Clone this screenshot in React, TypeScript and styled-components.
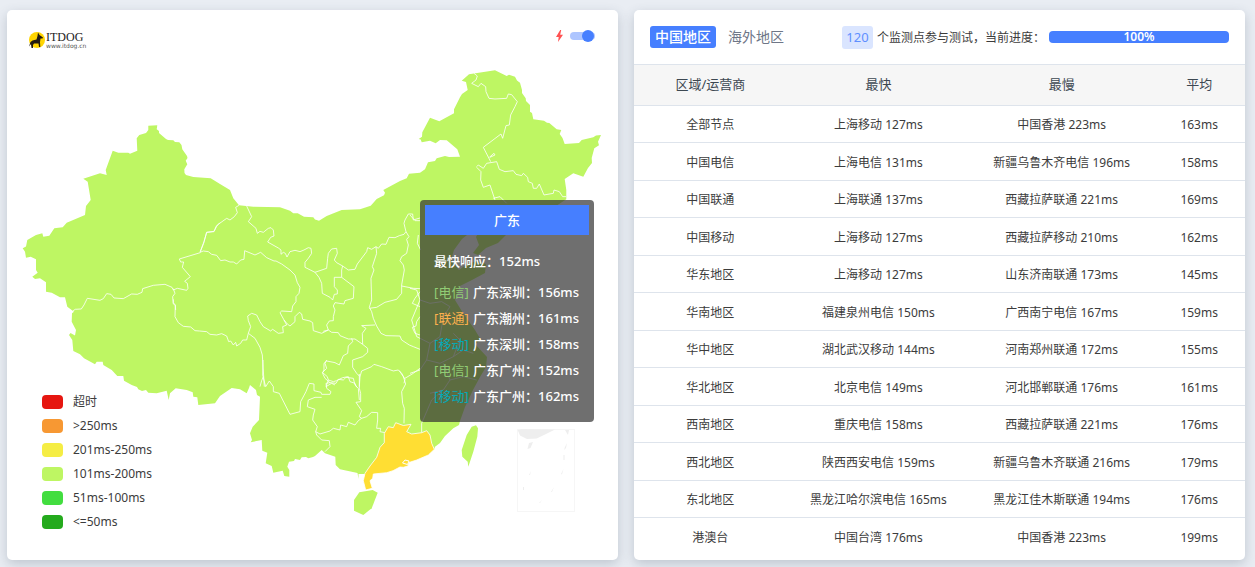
import React from "react";
import styled, { createGlobalStyle } from "styled-components";

const GlobalStyle = createGlobalStyle`
  *, *::before, *::after { box-sizing: border-box; }
  body {
    margin: 0;
    background: #e9edf3;
    color: #3c3c3c;
    font-family: "Noto Sans", "Noto Sans CJK SC", sans-serif;
    font-size: 12px;
  }
`;

const Page = styled.main`
  display: grid;
  grid-template-columns: 1fr 1fr;
  gap: 16px;
  padding: 10px 10px 7px 7px;
`;

const Card = styled.section`
  min-width: 0;
  background: #fff;
  border-radius: 5px;
  box-shadow: 0 4px 12px rgba(60, 75, 95, 0.24);
  overflow: hidden;
`;

const MapHeader = styled.header`
  display: flex;
  align-items: center;
  justify-content: space-between;
  height: 50px;
  padding: 0 23px 0 21px;
`;

const Logo = styled.a`
  display: flex;
  align-items: center;
  margin-top: 10px;
  color: #222;
  text-decoration: none;
`;

const LogoText = styled.span`
  display: flex;
  flex-direction: column;
  font-family: "Liberation Serif", serif;
  font-size: 12px;
  line-height: 12px;
`;

const LogoUrl = styled.small`
  font-family: "DejaVu Sans", sans-serif;
  font-size: 6px;
  line-height: 6px;
  color: #555;
`;

const SpeedToggle = styled.label`
  display: flex;
  align-items: center;
  gap: 6px;
  margin-top: 2px;
`;

const Switch = styled.input`
  appearance: none;
  position: relative;
  width: 25px;
  height: 8px;
  margin: 0;
  border-radius: 4px;
  background: #adc5ff;
  &::before {
    content: "";
    position: absolute;
    top: -2px;
    left: 0;
    width: 12px;
    height: 12px;
    border-radius: 50%;
    background: #467fff;
  }
  &:checked::before { left: 12px; }
`;

const MapArea = styled.div`
  position: relative;
`;

const MapSvg = styled.svg`
  display: block;
  width: 100%;
  height: auto;
`;

const Legend = styled.ul`
  position: absolute;
  left: 35px;
  bottom: 26px;
  margin: 0;
  padding: 0;
  list-style: none;
`;

const LegendItem = styled.li`
  display: flex;
  align-items: center;
  gap: 10px;
  height: 24px;
  line-height: 20px;
`;

const Swatch = styled.i<{ $color: string }>`
  width: 21px;
  height: 14px;
  border-radius: 4px;
  background: ${(p) => p.$color};
`;

const LegendText = styled.span`
  padding-bottom: 1px;
`;

const Tooltip = styled.div`
  position: absolute;
  top: 140px;
  right: 24px;
  padding: 5px;
  border-radius: 4px;
  background: rgba(50, 50, 50, 0.7);
  color: #fff;
  font-size: 13px;
  font-weight: 500;
  line-height: 26px;
  white-space: nowrap;
`;

const TooltipTitle = styled.div`
  background: #467fff;
  line-height: 30px;
  text-align: center;
`;

const TooltipBody = styled.div`
  padding: 13px 10px 8px 9px;
`;

const Fastest = styled.p`
  margin: 0 0 5px;
`;

const Carrier = styled.span<{ $color: string }>`
  margin-right: 1px;
  color: ${(p) => p.$color};
  font-weight: 400;
`;

const PanelHeader = styled.header`
  display: flex;
  align-items: center;
  justify-content: space-between;
  height: 54px;
  padding: 0 16px;
`;

const Tabs = styled.nav`
  display: flex;
  gap: 7px;
`;

const Tab = styled.button<{ $active?: boolean }>`
  height: 22px;
  padding: 0 5px;
  border: 0;
  border-radius: 3px;
  background: ${(p) => (p.$active ? "#467fff" : "transparent")};
  color: ${(p) => (p.$active ? "#fff" : "#6e7687")};
  font-family: inherit;
  font-size: 14px;
  font-weight: ${(p) => (p.$active ? 500 : 400)};
  line-height: 22px;
`;

const Status = styled.div`
  display: flex;
  align-items: center;
  gap: 4px;
  white-space: nowrap;
`;

const Count = styled.span`
  min-width: 31px;
  border-radius: 3px;
  background: #dae5ff;
  color: #5f8fff;
  font-size: 13px;
  line-height: 23px;
  text-align: center;
`;

const Progress = styled.div`
  width: 180px;
  height: 12px;
  border-radius: 4px;
  background: #467fff;
  color: #fff;
  font-weight: 600;
  line-height: 12px;
  text-align: center;
`;

const Table = styled.table`
  width: 100%;
  table-layout: fixed;
  border-spacing: 0;
  text-align: center;
`;

const HeadCell = styled.th<{ $width: string }>`
  width: ${(p) => p.$width};
  height: 41px;
  padding: 0 0 3px;
  border-top: 1px solid #dee4ec;
  background: #f6f6f6;
  color: #3d4852;
  font-size: 13px;
  font-weight: 400;
`;

const Row = styled.tr`
  height: 37px;
  &:nth-child(even) { height: 38px; }
`;

const Cell = styled.td`
  padding: 2px 0 0;
  border-top: 1px solid #dee4ec;
  line-height: 20px;
`;

const legend = [
  ["#e61610", "超时"],
  ["#f79833", ">250ms"],
  ["#f5ed44", "201ms-250ms"],
  ["#bef663", "101ms-200ms"],
  ["#42dd3f", "51ms-100ms"],
  ["#24aa1d", "<=50ms"],
];

const readings = [
  ["#91cc75", "电信", "广东深圳：156ms"],
  ["#fdb04e", "联通", "广东潮州：161ms"],
  ["#05a9b8", "移动", "广东深圳：158ms"],
  ["#91cc75", "电信", "广东广州：152ms"],
  ["#05a9b8", "移动", "广东广州：162ms"],
];

const rows = [
  ["全部节点", "上海移动 127ms", "中国香港 223ms", "163ms"],
  ["中国电信", "上海电信 131ms", "新疆乌鲁木齐电信 196ms", "158ms"],
  ["中国联通", "上海联通 137ms", "西藏拉萨联通 221ms", "169ms"],
  ["中国移动", "上海移动 127ms", "西藏拉萨移动 210ms", "162ms"],
  ["华东地区", "上海移动 127ms", "山东济南联通 173ms", "145ms"],
  ["华南地区", "福建泉州电信 150ms", "广西南宁电信 167ms", "159ms"],
  ["华中地区", "湖北武汉移动 144ms", "河南郑州联通 172ms", "155ms"],
  ["华北地区", "北京电信 149ms", "河北邯郸联通 176ms", "161ms"],
  ["西南地区", "重庆电信 158ms", "西藏拉萨联通 221ms", "176ms"],
  ["西北地区", "陕西西安电信 159ms", "新疆乌鲁木齐联通 216ms", "179ms"],
  ["东北地区", "黑龙江哈尔滨电信 165ms", "黑龙江佳木斯联通 194ms", "176ms"],
  ["港澳台", "中国台湾 176ms", "中国香港 223ms", "199ms"],
];

const mainland =
  "M148.3 125.7L157.3 125.3 156.7 129.3 159 131 159 133 166 139 168 140 173.3 140.3 175 142 179.3 142.3 181.5 145 182.3 149.3 187 156 187.5 158 185.7 160.7 187.3 164.3 184.3 169.3 184.5 173 186 175 193.3 177 210.7 178.3 220 184 230 190 233.3 198.3 239 205.3 253.3 206.7 280 207.3 290 210.7 293.3 213.3 297.7 213.3 304 216.7 313.3 217.3 315 219.5 319 220.7 326.7 216 341.7 210 360 209.3 370.7 205.7 376.7 199 384 195.3 385 192.7 383.3 190 400 181 406.7 178.3 409 173.7 420 172.7 425 169.3 428 162.3 435 161 436.7 158.3 445 156 449 157 460 156.7 457.3 149.3 446.7 140.3 440 140 435.7 143.3 430 140.7 421.7 142.3 420.7 139.5 418.7 139 422 136.7 422.3 132.3 430 117.7 439.3 121.3 454 113.3 454 109.3 460 97.3 462 94 467.7 90 466 82 461.7 80.7 469 74.3 495 70.3 506.7 76 509 74.7 515 76.7 517 80.5 520 82.7 522 90 522 93 525.7 98.3 526 101 530 105 530 111.7 532 113 533.3 119.3 544 120.7 547 122.7 549.3 123 556.7 129.3 561.3 130 559.7 134 562.5 138 564.7 144 579 143 581.7 140 593.3 137.3 596 135.5 601 135 598 141.7 599 145.3 594.3 148.3 591.7 158 592 163 588 168 583.3 176.7 573.3 173.3 564.7 179 566.3 190 566.3 199.3 556 206 548 216 533 223 520 230 506 235 498 243 486 248 478 255 473 253 479 245 476 237 481 227 472 231 462 239 454 250 451 260 459 270 467 264 477 261 486 264 485 273 472 280 460 286 455 300 463 313 475 330 481 340 475 344 487 357 486 367 480 377 473 390 465 407 460 421 459 425 453.3 428.3 445 436 440 443 435 446.7 434.3 449.3 428 455 400 465 372 474 362 474 358.5 474 358.5 479 357.5 473 351.7 471.7 340 469.3 335.7 465 335.3 456.7 325 453.3 321.7 450 315 456 313 457 308.3 458.3 306 457 301.7 457.3 300 460 295 459 294 461 289 461.7 287.3 466.7 289.3 470 289.3 476.7 284.3 476 282.7 470.7 273.3 472.7 271.7 466 265.7 463.3 267.3 452.7 262.3 450.7 261.7 440 250.7 442.3 252 440 250 433.3 252.7 426.7 259 420 260 396.7 257 395 256 390 250 385 249 388 246.7 393.3 240 389.3 231.7 388 220 396 215 403.3 198.3 405 197.3 397.3 193.3 396.7 192.7 392.3 186.7 390 175.7 388.3 170 393.3 168.7 400 166.7 390.7 156.7 393.3 148.3 392.7 146 390 142 391 138.3 389.3 137 387 131.7 385 124 380.7 123.3 376 117.3 376 111.7 370 103.3 365 102.7 361.7 96.7 361.7 95 364.3 84 358.3 80 354.3 73.3 351 72.3 340 69 335 70.5 333 75 335.5 76 330 71.7 321.7 72 313.3 74 311.7 67.3 306.7 65 297.3 60 297.3 51.7 292.7 46 291.7 46 282.3 40 278.3 35 279 32.3 276.7 37.7 272.7 36 270 36 259.3 30.7 256.7 26 257.7 25 251.7 22.7 248.3 26 246.5 27.3 240 36 235 42.3 233.3 43.3 236.7 49.3 235.7 54.3 228.3 62.7 227.3 66.7 222.7 85 215 86 206 90.7 200 87.7 181.7 83.3 178.7 100 173.3 106.7 175 105.7 170 112.7 150.7 118.3 152.7 128.3 152.7 130 153.7 137.3 150.7 136.7 138.3 139.3 135 146 133 148.3 130Z";

// Province borders, grouped by region; each group is drawn on a grid three times finer than the map.
const borders = [
  {
    origin: "10 110",
    d: "M188 603L196 598 214 597 222 585 232 565 270 571 280 566 290 551 303 553 312 564 340 566 365 552 382 553 396 547 398 536 430 526 465 523 486 532 490 540 502 535 530 541 534 535 532 520 524 514 541 500 517 472 521 456 512 456 508 447 571 428M490 536L495 550 488 560 490 582 496 586 497 600M571 425L581 400 590 367 612 364 618 350 630 338",
  },
  {
    origin: "60 270",
    d: "M340 88L340 98 346 105 345 140 355 158 370 169 392 171 405 182 418 183",
  },
  {
    origin: "200 190",
    d: "M117 46L107 52 112 68 103 80 90 90 80 85 52 105 42 125 20 127 12 155 0 187M139 46L155 80 145 95 168 115 172 130 180 124 190 127 205 115 213 113 220 120 222 138 212 142 203 156 235 174 243 180 243 193 250 187 256 190 261 201 270 185 285 181 300 185 312 180 325 173 333 175 335 190 325 205 315 217 315 232 345 247M0 187L10 183 25 185 35 193 50 196 62 212 75 210 90 216 100 216 110 222 122 210 132 208 134 182 165 195 182 187 200 203 222 213 228 213 245 222 270 240 285 255 292 278 300 292 297 310 288 320 288 335 278 348 275 365 245 363 240 368 252 390 262 402 270 408 285 395 285 380 298 367 305 372 308 388 330 393 338 398 340 422 365 430 385 420M145 430L152 410 145 392 143 378 155 370 170 375 180 395 190 410 212 423 218 418 235 430 250 428 248 410 260 405 252 390M-2 423L20 425 30 433 50 435 65 431 80 438 86 455 92 453 100 465 107 457 110 468 122 460 128 450 140 450 145 430M345 247L380 235 383 205 385 190 395 177 410 175 412 190 403 210 410 218 428 228 425 240 425 262 403 262 403 290 412 300 412 312 403 313 398 330 390 322 367 310 365 280 357 262 345 247M425 262L462 290 460 325 435 332 432 342 405 338 400 348 405 360 400 380 400 392 388 393 380 405 385 420 370 424M428 228L445 240 465 238 472 222 500 185 503 173 515 178 528 170 535 175 545 162 558 163 567 142 585 143 598 137 612 133 618 125M528 170L530 190 517 230 522 240 513 265 515 330 508 352 515 365 520 385 530 408 543 430 558 437 600 438 605 450 628 465 640 470 660 478M508 355L530 352 555 337 590 328 605 310 605 285 613 240 610 225 600 212 605 200 620 190 625 165 620 148 627 140 618 125 612 100 615 90 625 72 638 72 640 90 660 84M605 288L640 295 660 296M660 305L645 325 637 340 660 350M660 380L650 395 648 408 637 412 645 430 660 435M385 420L395 427 415 428 420 437 445 447 465 447 488 463 487 430 498 415 485 407 525 405M455 445L458 455 445 468 443 490 430 497 418 525 405 518 380 513 372 520 372 540 368 548 382 560 385 570 378 590 395 580 405 585M488 463L503 475 503 487 488 500 458 510 458 532 470 550 480 560 478 590M480 560L485 543 515 530 522 523 545 530 580 543 595 540 605 550 615 568 612 580M615 565L640 550 660 535M385 570L400 575 410 572 428 563 445 560 450 575 465 580 470 592M145 430L165 445 180 472 187 495 193 590M190 560L185 572 180 590",
  },
  {
    origin: "230 360",
    d: "M99 0L98 45 107 80 118 63 130 80 130 95 148 100 180 163 210 155 212 125 228 95 238 70 252 72 252 92 273 97 275 103 300 103 303 95 290 85 288 70 300 68 318 70 325 58 340 60 348 52 370 55 375 75 385 85 388 120M275 112L255 112 235 120 232 140 255 148 250 165 248 180 262 200 257 215M290 0L285 10 290 25 277 38 285 55 300 68M388 42L388 85 392 100 392 125 378 127 395 152 388 170 395 175M508 32L520 50 527 72 515 95 518 130 523 145 522 190M257 215L270 222 300 213 310 205 330 210 332 195 350 200 355 187 375 195 385 182 395 175 410 170 425 157 443 158 443 180 440 205 452 205 450 215 465 218M257 215L260 225 275 240 298 242 300 260 285 275M575 218L575 190 590 155 605 120 640 90",
  },
  {
    origin: "400 60",
    d: "M222 40L232 48 228 60 215 70 235 80 243 70 257 80 258 95 267 115 285 117 320 115 325 102 335 104 352 125 345 140 332 165 328 195 318 197 308 235 303 222 250 262 272 305M268 292L282 280 285 285 270 292M230 320L235 315 250 325 260 310 290 305 298 328 315 335 340 332 348 343 365 347 370 340 383 352 385 365 397 370 400 385 410 385 418 372 432 405 460 400 462 390 478 395 488 410 498 410M230 322L243 335 242 360 250 382 270 375 280 405 285 420M280 415L300 410 320 430",
  },
  {
    origin: "410 190",
    d: "M0 75L15 92 30 92M25 135L22 160 32 180M0 295L20 300 30 330 60 340 95 335 120 350M30 330L5 390 20 440 60 460 90 440 100 380 120 350M0 550L30 540 50 510 60 460M50 510L90 520 130 500 160 480 190 490M100 520L120 570 100 600 60 610M120 570L160 560 200 570M130 430L150 450 130 500",
  },
];

const guangdong =
  "M434.3 449.3L428.3 455 416.7 460 409 462.5 408 466 403.3 467.3 400 467 393 470.7 386.7 472.7 373.3 474 372.7 478.3 370 480.7 372.3 488.3 365.7 490 363.3 480.7 365 473.3 370 466 376.7 457.3 380 447.3 384.3 442.7 384.3 433.3 388.3 426.7 393.3 427.7 395.7 422.7 403.3 425.5 411 424.3 406.7 431.7 411.7 434 421.7 432.7 426.7 430.7 430 435 431.7 443.3Z";

function ChinaMap() {
  return (
    <MapSvg viewBox="7 60 611 500" role="img" aria-label="中国地区">
      <path d={mainland} fill="#bef663" />
      <path d="M359.3 492.3L372.7 490 377.7 492.7 371.7 508.3 363.3 515 354 510.7 354 500Z" fill="#bef663" />
      <path d="M471.7 426.7L476 425.3 478 428.3 477.3 436.7 473.3 451.7 468.3 466.7 467.7 461.7 462.3 456.7 461.7 450 466.7 435Z" fill="#bef663" />
      {borders.map((b) => (
        <g key={b.origin} transform={`translate(${b.origin}) scale(0.3333)`}>
          <path d={b.d} fill="none" stroke="#fff" strokeOpacity="0.8" strokeWidth="3" strokeLinejoin="round" />
        </g>
      ))}
      <path d={guangdong} fill="#ffde33" stroke="#fff" strokeOpacity="0.8" />
      <path d="M402.5 463L405 460 409 461 407.5 464.5Z" fill="#ffde33" stroke="#fff" />
      <rect x="517.5" y="429.5" width="57" height="82" fill="none" stroke="#f6f6f6" />
      <path d="M517.7 430L522 429.3 555 429.5 546 434 536.7 438.5 527 439 520 435.5ZM565 430L569 430 568 435ZM529 443L533 442 530.5 448 527.5 449ZM567 443L565 447 564 450 566 448ZM563.5 455h1v5h-1ZM563.5 469L561 474 562 474.5ZM531 471L529 475 530 475ZM554 487L551 492 552 492ZM523 487h1v3h-1ZM542 500L539 503 540 503Z" fill="#eee" />
    </MapSvg>
  );
}

export default function App() {
  return (
    <>
      <GlobalStyle />
      <Page>
        <Card>
          <MapHeader>
            <Logo href="#">
              <svg width="18" height="18" viewBox="0 0 18 18" aria-hidden="true">
                <circle cx="9" cy="9" r="8" fill="#ffd500" />
                <path d="M10 1.5L11.5 4 15 6.5 14.5 7.5 12.5 7.5 12 11 12.3 16 11 16 10.5 12.5 6 12.5 5 14 5 17 3.5 17 3 13 1 15.5 2.5 11 4.5 9.5 8.5 8.5 9.5 5Z" fill="#221b12" />
              </svg>
              <LogoText>
                <span>ITDOG</span>
                <LogoUrl>www.itdog.cn</LogoUrl>
              </LogoText>
            </Logo>
            <SpeedToggle>
              <svg width="9" height="14" viewBox="0 0 9 14" aria-hidden="true">
                <path d="M5.2 1L1 8H3.7L3 13 8 5.8H5.2L6.2 1Z" fill="#ff5252" />
              </svg>
              <Switch type="checkbox" defaultChecked aria-label="快速测试" />
            </SpeedToggle>
          </MapHeader>
          <MapArea>
            <ChinaMap />
            <Legend>
              {legend.map(([color, label]) => (
                <LegendItem key={label}>
                  <Swatch $color={color} />
                  <LegendText>{label}</LegendText>
                </LegendItem>
              ))}
            </Legend>
            <Tooltip>
              <TooltipTitle>广东</TooltipTitle>
              <TooltipBody>
                <Fastest>最快响应：152ms</Fastest>
                {readings.map(([color, carrier, text]) => (
                  <div key={carrier + text}>
                    <Carrier $color={color}>[{carrier}]</Carrier> {text}
                  </div>
                ))}
              </TooltipBody>
            </Tooltip>
          </MapArea>
        </Card>
        <Card>
          <PanelHeader>
            <Tabs>
              <Tab type="button" $active>中国地区</Tab>
              <Tab type="button">海外地区</Tab>
            </Tabs>
            <Status>
              <Count>120</Count>
              <span>个监测点参与测试，当前进度：</span>
              <Progress role="progressbar" aria-label="当前进度" aria-valuenow={100}>100%</Progress>
            </Status>
          </PanelHeader>
          <Table>
            <thead>
              <tr>
                <HeadCell $width="25%">区域/运营商</HeadCell>
                <HeadCell $width="30%">最快</HeadCell>
                <HeadCell $width="30%">最慢</HeadCell>
                <HeadCell $width="15%">平均</HeadCell>
              </tr>
            </thead>
            <tbody>
              {rows.map((row) => (
                <Row key={row[0]}>
                  {row.map((value, i) => (
                    <Cell key={i}>{value}</Cell>
                  ))}
                </Row>
              ))}
            </tbody>
          </Table>
        </Card>
      </Page>
    </>
  );
}
